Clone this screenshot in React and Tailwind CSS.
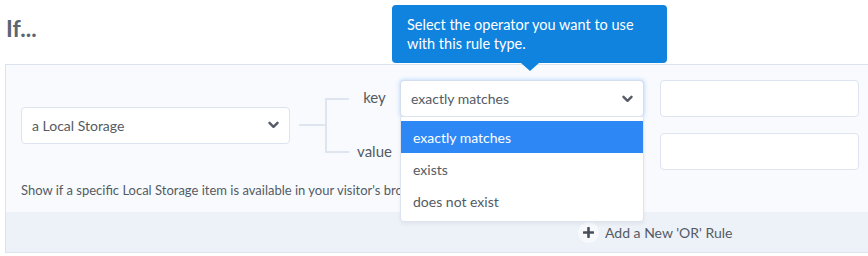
import React from 'react';

const Chevron = ({ className = '' }) => (
  <svg width="11" height="8" viewBox="0 0 11 8" className={className}>
    <polyline points="1.5,1.8 5.5,5.8 9.5,1.8" fill="none" stroke="#555c66" strokeWidth="2.4" strokeLinecap="round" strokeLinejoin="round" />
  </svg>
);

const options = ['exactly matches', 'exists', 'does not exist'];

const App = () => {
  return (
    <div className="relative w-[868px] h-[256px] overflow-hidden bg-white font-['Lato',sans-serif] text-[#545b64]">
      <h1 className="h-[64px] pl-[6px] pt-[14px] text-[23px] leading-[28px] font-bold text-[#5c6573]">If...</h1>

      <div className="ml-[5px] w-[1300px] border border-[#dbe3ef] bg-[#f8fafe]">
        <div className="px-[15px] pt-[15px] pb-[14px]">
          <div className="flex items-center">
            {/* rule type */}
            <div className="flex h-[37px] w-[269px] items-center justify-between rounded-[4px] border border-[#dde4ef] bg-white pl-[10px] pr-[10px] text-[14px]">
              <span>a Local Storage</span>
              <Chevron />
            </div>

            {/* connector */}
            <div className="ml-[9px] h-[2px] w-[26px] bg-[#dfe5ef]" />
            <div className="h-[55px] w-[24px] border-y-2 border-l-2 border-[#dfe5ef]" />

            <div className="flex flex-col gap-[16px]">
              <div className="flex items-center">
                <div className="w-[51px] pb-[3px] text-center text-[15px]">key</div>
                <div className="relative">
                  <div className="flex h-[37px] w-[244px] items-center justify-between rounded-[4px] border border-[#d3ddeb] bg-white pl-[10px] pr-[10px] text-[14px] shadow-[0_0_4px_rgba(43,135,245,0.35)]">
                    <span>exactly matches</span>
                    <Chevron />
                  </div>
                  <div className="absolute left-0 top-[36px] z-10 w-[244px] rounded-b-[4px] border border-[#dde4ef] bg-white py-[4px] shadow-[0_2px_4px_rgba(0,0,0,0.06)]">
                    {options.map((o, i) => (
                      <div
                        key={o}
                        className={`flex h-[32px] items-center px-[12px] text-[14px] ${i === 0 ? 'bg-[#2d87f5] text-white' : ''}`}
                      >
                        {o}
                      </div>
                    ))}
                  </div>
                </div>
                <div className="ml-[16px] h-[37px] w-[199px] rounded-[4px] border border-[#dde4ef] bg-white" />
              </div>
              <div className="flex items-center">
                <div className="w-[51px] text-center text-[15px]">value</div>
                <div className="w-[244px]" />
                <div className="ml-[16px] h-[37px] w-[199px] rounded-[4px] border border-[#dde4ef] bg-white" />
              </div>
            </div>
          </div>

          <p className="mt-[12px] text-[13px] leading-[16px]">
            Show if a specific Local Storage item is available in your visitor's browser.
          </p>
        </div>

        <div className="flex h-[40px] items-center bg-[#edf1f8] pl-[572px]">
          <span className="flex h-[21px] w-[21px] items-center justify-center rounded-full bg-[#f7f9fc]">
            <svg width="11" height="11" viewBox="0 0 11 11">
              <path d="M5.5 1v9M1 5.5h9" stroke="#4a4f57" strokeWidth="2.6" strokeLinecap="round" />
            </svg>
          </span>
          <span className="ml-[6px] text-[14px]">Add a New 'OR' Rule</span>
        </div>
      </div>

      {/* tooltip */}
      <div className="absolute left-[392px] top-[5px] w-[275px] rounded-[4px] bg-[#0f83de] px-[15px] py-[10px] text-[14.5px] leading-[19px] text-white">
        Select the operator you want to use
        <br />
        with this rule type.
        <span className="absolute left-[129px] top-full h-0 w-0 border-x-[9px] border-t-[8px] border-x-transparent border-t-[#0f83de]" />
      </div>
    </div>
  );
};

export default App;
